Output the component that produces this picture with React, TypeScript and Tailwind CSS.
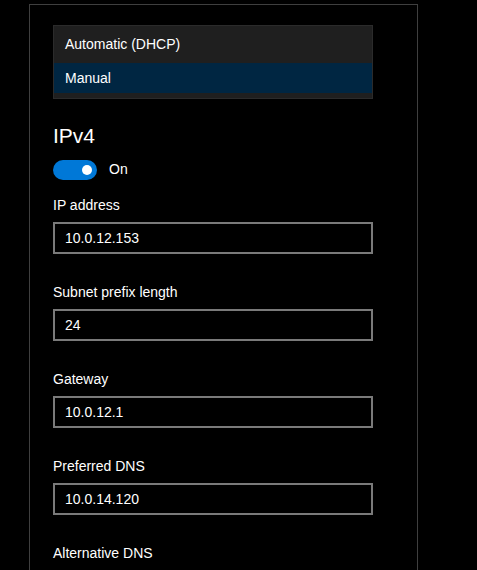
import React, { useState } from 'react';

const fields = [
  { label: 'IP address', value: '10.0.12.153' },
  { label: 'Subnet prefix length', value: '24' },
  { label: 'Gateway', value: '10.0.12.1' },
  { label: 'Preferred DNS', value: '10.0.14.120' },
  { label: 'Alternative DNS', value: '' },
];

function Toggle({ on, onChange }: { on: boolean; onChange: () => void }) {
  return (
    <button
      onClick={onChange}
      className={`flex h-[20px] w-[44px] items-center rounded-full px-[5px] ${
        on ? 'justify-end bg-[#0078d7]' : 'justify-start border-2 border-white bg-transparent'
      }`}
    >
      <span className="block h-[10px] w-[10px] rounded-full bg-white" />
    </button>
  );
}

export default function App() {
  const [mode, setMode] = useState('Manual');
  const [ipv4, setIpv4] = useState(true);

  return (
    <div
      className="h-[570px] w-[477px] overflow-hidden bg-black text-white"
      style={{ fontFamily: '"Liberation Sans", Arial, sans-serif' }}
    >
      <div className="ml-[29px] mt-[4px] h-[600px] w-[389px] border border-[#3f3f3f] pl-[23px] pt-[20px]">
        {/* Mode dropdown list */}
        <div className="w-[320px] border border-[#2b2b2b] bg-[#1f1f1f] pb-[5px] text-[14px]">
          {['Automatic (DHCP)', 'Manual'].map((item) => (
            <div
              key={item}
              onClick={() => setMode(item)}
              className={`flex items-center pl-[11px] ${
                item === 'Automatic (DHCP)' ? 'h-[37px]' : 'h-[30px]'
              } ${mode === item ? 'bg-[#002642]' : ''}`}
            >
              {item}
            </div>
          ))}
        </div>

        {/* IPv4 */}
        <div className="mt-[23px] h-[28px] text-[21px] leading-[28px] font-light">IPv4</div>
        <div className="mt-[9px] flex items-center gap-[12px]">
          <Toggle on={ipv4} onChange={() => setIpv4(!ipv4)} />
          <span className="text-[14px]">{ipv4 ? 'On' : 'Off'}</span>
        </div>

        <div className="mt-[15px]">
          {fields.map((f) => (
            <div key={f.label} className="mb-[28px]">
              <div className="h-[20px] text-[14px] leading-[20px]">{f.label}</div>
              <input
                defaultValue={f.value}
                className="mt-[7px] block h-[32px] w-[320px] border-2 border-[#7a7a7a] bg-black px-[10px] text-[14px] text-white outline-none"
              />
            </div>
          ))}
        </div>
      </div>
    </div>
  );
}
